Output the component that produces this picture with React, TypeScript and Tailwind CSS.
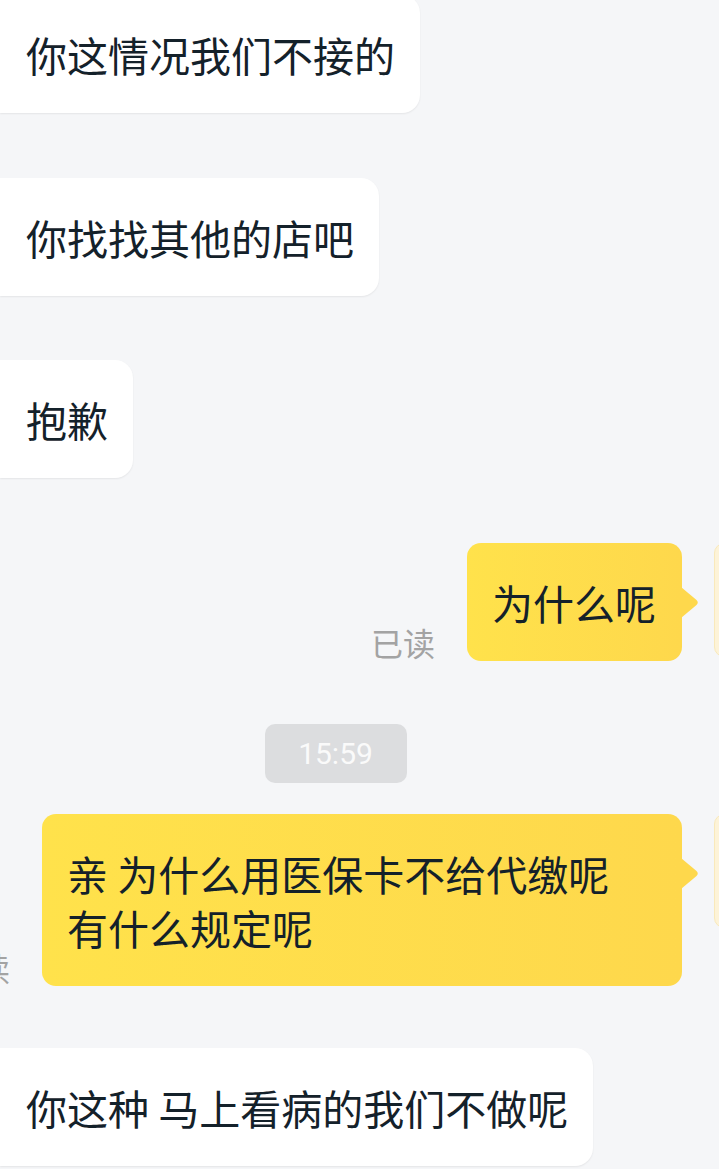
import React from "react";

const font = { fontFamily: '"Noto Sans CJK SC", "Noto Sans", sans-serif' };

const Left = ({ text, className = "" }: { text: string; className?: string }) => (
  <div className={`flex ${className}`}>
    <div className="shrink-0 bg-white rounded-r-[18px] pl-[26px] pr-[25px] py-[32px] text-[41px] leading-[54px] text-[#14212a] shadow-[0_1px_2px_rgba(0,0,0,0.07)]">
      {text}
    </div>
  </div>
);

const Tail = () => (
  <svg
    className="absolute right-[-17px] top-[44px]"
    width="18"
    height="31"
    viewBox="0 0 18 31"
  >
    <path d="M0 0 L15.5 13 Q18 15.5 15.5 18 L0 31 Z" fill="#fed84c" />
  </svg>
);

const Right = ({
  children,
  className = "",
  bubbleClass = "",
}: {
  children: React.ReactNode;
  className?: string;
  bubbleClass?: string;
}) => (
  // row runs past the right edge so the avatar is cut like in the screen
  <div className={`flex justify-end items-start -mr-[109px] ${className}`}>
    <span className="shrink-0 self-end mb-[3px] text-[32px] leading-none text-[#a3a3a3]">
      已读
    </span>
    <div
      className={`relative shrink-0 ml-[32px] bg-linear-to-r from-[#ffe24b] to-[#fed84c] rounded-[14px] pl-[25px] pr-[26px] py-[32px] text-[41px] leading-[54px] text-[#14212a] ${bubbleClass}`}
    >
      {children}
      <Tail />
    </div>
    <div className="shrink-0 ml-[32px] w-[114px] h-[114px] rounded-[10px] bg-[#fdf3d8] border border-[#f9e9bb]" />
  </div>
);

export default function App() {
  return (
    <div
      className="w-[719px] h-[1169px] overflow-hidden bg-[#f5f6f8]"
      style={font}
    >
      <div className="flex flex-col">
        <Left text="你这情况我们不接的" className="-mt-[5px]" />
        <Left text="你找找其他的店吧" className="mt-[65px]" />
        <Left text="抱歉" className="mt-[64px]" />

        <Right className="mt-[65px]">为什么呢</Right>

        <div className="flex justify-center pr-[48px] mt-[63px]">
          <div
            className="w-[142px] h-[59px] rounded-[10px] bg-[#dcdddf] flex items-center justify-center text-[30px] text-[#fafafa]"
            style={{ fontFamily: "Roboto, sans-serif" }}
          >
            15:59
          </div>
        </div>

        <Right className="mt-[31px]" bubbleClass="w-[640px]">
          亲 为什么用医保卡不给代缴呢
          <br />
          有什么规定呢
        </Right>

        <Left text="你这种 马上看病的我们不做呢" className="mt-[62px]" />
      </div>
    </div>
  );
}
